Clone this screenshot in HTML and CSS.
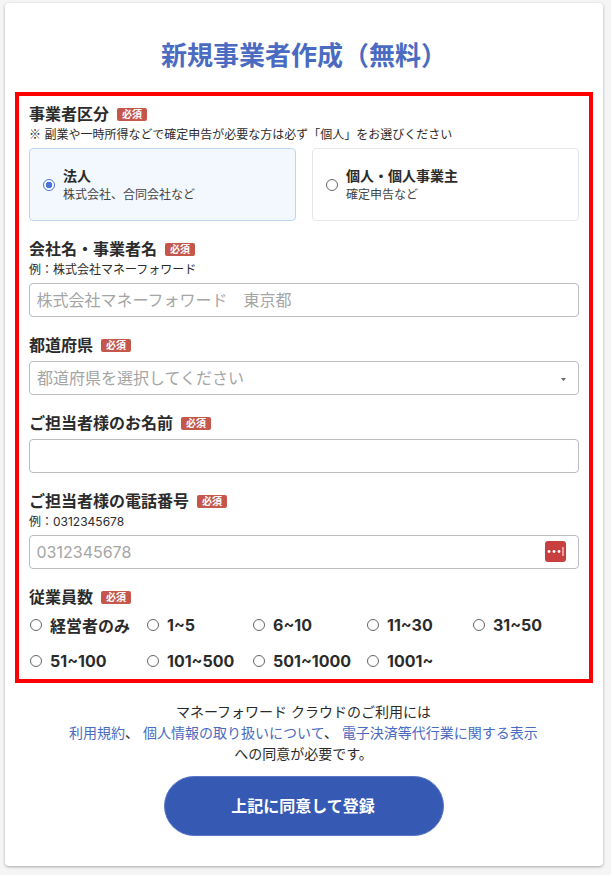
FILE: index.html
```html
<!DOCTYPE html>
<html lang="ja">
<head>
<meta charset="utf-8">
<title>新規事業者作成（無料）</title>
<link rel="stylesheet" href="styles.css">
</head>
<body>
<main class="card">
  <h1 class="title">新規事業者作成（無料）</h1>
  <form class="form">
    <div class="field">
      <div class="label">事業者区分<span class="badge">必須</span></div>
      <p class="note"><span class="mark">※</span> 副業や一時所得などで確定申告が必要な方は必ず「個人」をお選びください</p>
      <div class="types">
        <label class="type type-on">
          <input class="radio" type="radio" name="type" checked>
          <span class="type-text"><b class="type-name">法人</b><span class="type-sub">株式会社、合同会社など</span></span>
        </label>
        <label class="type">
          <input class="radio" type="radio" name="type">
          <span class="type-text"><b class="type-name">個人・個人事業主</b><span class="type-sub">確定申告など</span></span>
        </label>
      </div>
    </div>
    <div class="field">
      <div class="label">会社名・事業者名<span class="badge">必須</span></div>
      <p class="note">例：株式会社マネーフォワード</p>
      <input class="control" type="text" placeholder="株式会社マネーフォワード　東京都">
    </div>
    <div class="field">
      <div class="label label-gap">都道府県<span class="badge">必須</span></div>
      <div class="wrap">
        <select class="control select"><option>都道府県を選択してください</option></select>
        <svg class="caret" width="5" height="3" viewBox="0 0 5 3"><path d="M0 0h5L2.5 3z" fill="#666"/></svg>
      </div>
    </div>
    <div class="field">
      <div class="label label-gap">ご担当者様のお名前<span class="badge">必須</span></div>
      <input class="control" type="text">
    </div>
    <div class="field">
      <div class="label">ご担当者様の電話番号<span class="badge">必須</span></div>
      <p class="note">例：0312345678</p>
      <div class="wrap">
        <input class="control" type="text" placeholder="0312345678">
        <svg class="pm" width="21" height="21" viewBox="0 0 21 21">
          <rect width="21" height="21" rx="3" fill="#c83f3f"/>
          <circle cx="4" cy="10.5" r="1.4" fill="#fff"/>
          <circle cx="9" cy="10.5" r="1.4" fill="#fff"/>
          <circle cx="14" cy="10.5" r="1.4" fill="#fff"/>
          <rect x="17.5" y="6" width="1" height="9" fill="#fff"/>
        </svg>
      </div>
    </div>
    <div class="field">
      <div class="label">従業員数<span class="badge">必須</span></div>
      <div class="sizes">
        <label class="size"><input class="radio" type="radio" name="size">経営者のみ</label>
        <label class="size"><input class="radio" type="radio" name="size">1~5</label>
        <label class="size"><input class="radio" type="radio" name="size">6~10</label>
        <label class="size"><input class="radio" type="radio" name="size">11~30</label>
        <label class="size"><input class="radio" type="radio" name="size">31~50</label>
        <label class="size"><input class="radio" type="radio" name="size">51~100</label>
        <label class="size"><input class="radio" type="radio" name="size">101~500</label>
        <label class="size"><input class="radio" type="radio" name="size">501~1000</label>
        <label class="size"><input class="radio" type="radio" name="size">1001~</label>
      </div>
    </div>
  </form>
  <p class="terms">マネーフォワード クラウドのご利用には<br><a class="link" href="#">利用規約</a>、 <a class="link" href="#">個人情報の取り扱いについて</a>、 <a class="link" href="#">電子決済等代行業に関する表示</a><br>への同意が必要です。</p>
  <button class="submit" type="button">上記に同意して登録</button>
</main>
</body>
</html>
```
FILE: styles.css
```css
* { box-sizing: border-box; }
html, body { margin: 0; }
body {
  padding: 3px 8px 9px 5px;
  background: #f5f5f5;
  color: #2b2b2b;
  font-family: Inter, "Noto Sans CJK JP", sans-serif;
}
.card {
  display: flex;
  flex-direction: column;
  align-items: center;
  height: 863px;
  padding: 35px 10px 30px;
  background: #fff;
  border-radius: 4px;
  box-shadow: 0 1px 3px rgba(0,0,0,.32);
}
.title {
  margin: 0 0 18px;
  font-size: 26px;
  line-height: 36px;
  font-weight: 700;
  color: #4a6bc1;
}
.form {
  align-self: stretch;
  display: flex;
  flex-direction: column;
  gap: 16px;
  padding: 6px 10px 0;
  height: 591px;
  border: 4px solid #f00;
}
.label {
  display: flex;
  align-items: center;
  font-size: 16px;
  line-height: 24px;
  font-weight: 700;
}
.label-gap { margin-bottom: 4px; }
.badge {
  display: inline-block;
  width: 30px;
  height: 13px;
  margin-left: 8px;
  border-radius: 2px;
  background: #c4574a;
  color: #fff;
  font-size: 10px;
  line-height: 13px;
  text-align: center;
}
.note {
  height: 18px;
  margin: 0 0 4px;
  font-size: 12px;
  line-height: 18px;
}
.mark { font-family: "Noto Sans CJK JP", sans-serif; line-height: 0; }
.types {
  display: grid;
  grid-template-columns: 1fr 1fr;
  gap: 16px;
}
.type {
  display: flex;
  align-items: center;
  gap: 8px;
  height: 73px;
  padding: 0 13px;
  border: 1px solid #e6e6e6;
  border-radius: 4px;
}
.type-on {
  background: #f3f8ff;
  border-color: #bcd6f2;
}
.type-text { display: flex; flex-direction: column; }
.type-name { font-size: 14px; line-height: 20px; font-weight: 700; }
.type-sub { font-size: 12px; line-height: 18px; color: #444; }
.radio {
  appearance: none;
  flex: none;
  width: 12px;
  height: 12px;
  margin: 0;
  border: 1px solid #666;
  border-radius: 50%;
  background: #fff;
}
.radio:checked {
  border-color: #4a73e0;
  background: radial-gradient(circle, #4a73e0 0 3px, #fff 3.6px);
}
.control {
  display: block;
  width: 100%;
  height: 34px;
  padding: 0 6.5px;
  border: 1px solid #bdbdbd;
  border-radius: 4px;
  background: #fff;
  font-family: inherit;
  font-size: 16px;
  color: #a5a5a5;
}
.control::placeholder { color: #a5a5a5; opacity: 1; }
.select { appearance: none; padding: 0 7px; }
.wrap { position: relative; }
.caret { position: absolute; right: 13px; top: 17px; }
.pm { position: absolute; right: 13px; top: 6px; }
.sizes {
  display: grid;
  grid-template-columns: 117px 106px 114px 106px 1fr;
  gap: 4px 0;
}
.size {
  display: flex;
  align-items: center;
  gap: 8px;
  height: 32px;
  padding-left: 1px;
  font-size: 16px;
  font-weight: 700;
}
.terms {
  margin: 18px 0 12px;
  padding-right: 1px;
  font-size: 14px;
  line-height: 21px;
  text-align: center;
}
.link { color: #4a6bc1; text-decoration: none; }
.submit {
  width: 280px;
  height: 60px;
  padding: 0 2px 2px 0;
  border: 1px solid #5a78c4;
  border-radius: 30px;
  background: #365ab3;
  color: #fff;
  font-family: inherit;
  font-size: 16px;
  font-weight: 700;
}
```
